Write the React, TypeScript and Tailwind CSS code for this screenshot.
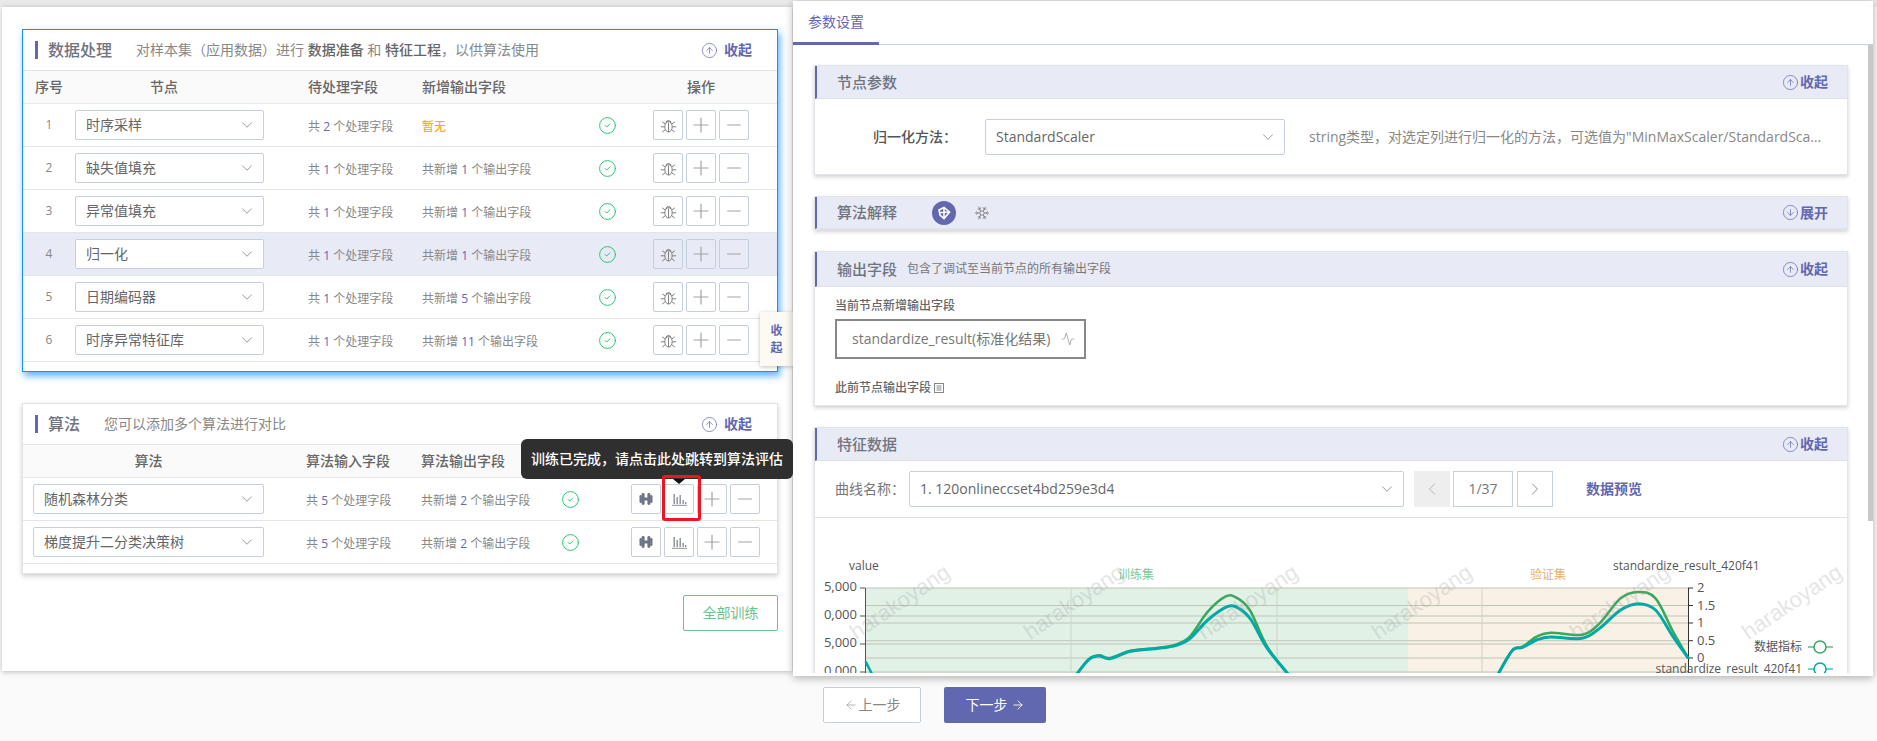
import type { ReactNode } from "react";
import { Activity, ArrowLeft, ArrowRight, ChevronDown, ChevronLeft, ChevronRight, CircleArrowDown, CircleArrowUp, CircleCheck, Minus, Plus, Snowflake } from "lucide-react";

const nodeRows = [
  { name: "时序采样", input: 2, output: null },
  { name: "缺失值填充", input: 1, output: 1 },
  { name: "异常值填充", input: 1, output: 1 },
  { name: "归一化", input: 1, output: 1, active: true },
  { name: "日期编码器", input: 1, output: 5 },
  { name: "时序异常特征库", input: 1, output: 11 },
];

const algoRows = [
  { name: "随机森林分类", input: 5, output: 2, marked: true },
  { name: "梯度提升二分类决策树", input: 5, output: 2 },
];

// curve points read off the zoomed crop
const toReal = (p: number[]) => [780 + p[0] / 1.4293, 420 + p[1] / 3];
const linePath = (pts: number[][]) => {
  const r = pts.map(toReal);
  let d = `M${r[0][0]} ${r[0][1]}`;
  for (let i = 0; i < r.length - 1; i++) {
    const p0 = r[i - 1] || r[i];
    const p1 = r[i];
    const p2 = r[i + 1];
    const p3 = r[i + 2] || p2;
    d += ` C${p1[0] + (p2[0] - p0[0]) / 6} ${p1[1] + (p2[1] - p0[1]) / 6} ${p2[0] - (p3[0] - p1[0]) / 6} ${p2[1] - (p3[1] - p1[1]) / 6} ${p2[0]} ${p2[1]}`;
  }
  return d;
};

const greenA = [[121, 725], [132, 770]];
const greenB = [[420, 770], [440, 718], [455, 706], [470, 714], [500, 692], [540, 683], [565, 673], [585, 648], [610, 575], [635, 530], [650, 532], [670, 570], [695, 680], [728, 770]];
const tealB = [[420, 770], [440, 718], [455, 708], [470, 716], [500, 694], [540, 685], [565, 676], [585, 655], [610, 600], [638, 560], [655, 566], [672, 600], [695, 685], [728, 770]];
const greenC = [[1023, 770], [1045, 692], [1060, 680], [1080, 650], [1100, 638], [1145, 644], [1170, 610], [1200, 535], [1225, 516], [1250, 535], [1275, 635], [1297, 715]];
const tealC = [[1023, 770], [1045, 692], [1060, 682], [1080, 660], [1100, 651], [1145, 655], [1170, 625], [1200, 570], [1225, 551], [1250, 570], [1275, 650], [1297, 715]];

function Collapse({ down, label, tight }: { down?: boolean; label: string; tight?: boolean }) {
  const Icon = down ? CircleArrowDown : CircleArrowUp;
  return (
    <span className={`flex items-center text-sm font-bold text-[#6268b0] ${tight ? "gap-[1px]" : "gap-[6px]"}`}>
      <Icon size={17} strokeWidth={1} />
      {label}
    </span>
  );
}

function FakeSelect({ text, className }: { text: string; className: string }) {
  return (
    <div className={`flex items-center justify-between rounded-[2px] border border-[#c5cfe0] bg-white pl-[10px] pr-[7px] text-sm text-[#666] ${className}`}>
      <span className="truncate">{text}</span>
      <ChevronDown size={18} strokeWidth={1} className="shrink-0 text-[#777]" />
    </div>
  );
}

function OpButton({ children, className = "" }: { children: ReactNode; className?: string }) {
  return (
    <div className={`relative flex h-[30px] w-[30px] items-center justify-center rounded-[2px] border border-[#c5cfdc] text-[#a3a3a3] ${className}`}>
      {children}
    </div>
  );
}

function BugIcon() {
  return (
    <svg width="17" height="17" viewBox="0 0 17 17" fill="none" stroke="#808080" strokeWidth="1">
      <ellipse cx="8.5" cy="9.8" rx="3.7" ry="5.2" />
      <path d="M5.8 5.6 A2.8 2.8 0 0 1 11.2 5.6" />
      <path d="M8.5 5.5 V15" />
      <path d="M5 6.8 L2.2 4.8 M4.8 9.8 H0.8 M5.2 12.8 L2.2 15 M12 6.8 L14.8 4.8 M12.2 9.8 H16.2 M11.8 12.8 L14.8 15" />
    </svg>
  );
}

function Dumbbell() {
  return (
    <svg width="14" height="12" viewBox="0 0 14 12" fill="#6d7486">
      <rect x="0.5" y="2" width="2.4" height="8" rx="1.2" />
      <rect x="2.6" y="0" width="3" height="12" rx="1.4" />
      <rect x="8.4" y="0" width="3" height="12" rx="1.4" />
      <rect x="11.1" y="2" width="2.4" height="8" rx="1.2" />
      <rect x="5" y="4.5" width="4" height="3" />
    </svg>
  );
}

function BarsIcon() {
  return (
    <svg width="15" height="13" viewBox="0 0 15 13" fill="#8a8f99">
      <rect x="0" y="11.8" width="15" height="1" />
      <rect x="1.5" y="1" width="1.4" height="10" />
      <rect x="4.5" y="4" width="1.4" height="7" />
      <rect x="7.5" y="2" width="1.4" height="9" />
      <rect x="10.5" y="7" width="1.4" height="4" />
      <rect x="13" y="9" width="1.4" height="2" />
    </svg>
  );
}

function Count({ prefix, n, suffix }: { prefix: string; n: number; suffix: string }) {
  return (
    <span className="text-xs text-[#888]">
      {prefix} <span className="text-[#6268b0]">{n}</span> {suffix}
    </span>
  );
}

function Chart() {
  const marks = [903, 1077, 1251, 1425, 1623, 1795];
  return (
    <svg width="1033" height="170" viewBox="814 518 1033 170" className="block">
      <rect x="864" y="588" width="543" height="100" fill="#e1f1e6" />
      <rect x="1407" y="588" width="280" height="100" fill="#f9f1e6" />
      {[588, 616, 644, 672, 605.5, 623, 640.7, 658].map((y) => (
        <line key={y} x1="864" x2="1687" y1={y} y2={y} stroke="#bfc4b8" strokeWidth="1" />
      ))}
      {[1070, 1276, 1481].map((x) => (
        <line key={x} x1={x} x2={x} y1="588" y2="688" stroke="#cfd3c8" strokeWidth="1" />
      ))}
      <line x1="864.5" x2="864.5" y1="588" y2="688" stroke="#555" />
      <line x1="1687.5" x2="1687.5" y1="588" y2="688" stroke="#333" />
      {[588, 616, 644, 672].map((y) => (
        <line key={y} x1="859" x2="864" y1={y} y2={y} stroke="#555" />
      ))}
      {[588, 605.5, 623, 640.7, 658].map((y) => (
        <line key={y} x1="1687" x2="1692" y1={y} y2={y} stroke="#333" />
      ))}
      <path d={linePath(greenA)} fill="none" stroke="#00a9a5" strokeWidth="2.5" />
      <path d={linePath(greenB)} fill="none" stroke="#3aa85c" strokeWidth="2.5" />
      <path d={linePath(tealB)} fill="none" stroke="#00a9a5" strokeWidth="3" />
      <path d={linePath(greenC)} fill="none" stroke="#3aa85c" strokeWidth="2.5" />
      <path d={linePath(tealC)} fill="none" stroke="#00a9a5" strokeWidth="3" />
      <g fontSize="12" fill="#555">
        <text x="848" y="570">value</text>
        <text x="1612" y="570">standardize_result_420f41</text>
        <text x="1135" y="579" textAnchor="middle" fill="#7cc79a">训练集</text>
        <text x="1547" y="579" textAnchor="middle" fill="#e6b36e">验证集</text>
        {[["5,000", 591], ["0,000", 619], ["5,000", 647], ["0,000", 675]].map(([t, y], i) => (
          <text key={i} x="856" y={y} textAnchor="end" fontSize="13">{t}</text>
        ))}
        {[["2", 592], ["1.5", 610], ["1", 627], ["0.5", 645], ["0", 662]].map(([t, y]) => (
          <text key={t} x="1696" y={y} fontSize="13">{t}</text>
        ))}
        <text x="1801" y="651" textAnchor="end">数据指标</text>
        <text x="1801" y="673" textAnchor="end">standardize_result_420f41</text>
      </g>
      <line x1="1807" x2="1832" y1="647" y2="647" stroke="#5cbf7f" strokeWidth="1.5" />
      <circle cx="1819" cy="647" r="6" fill="#fff" stroke="#3aa85c" strokeWidth="1.5" />
      <line x1="1807" x2="1832" y1="669" y2="669" stroke="#45c4c0" strokeWidth="1.5" />
      <circle cx="1819" cy="669" r="6" fill="#fff" stroke="#00a9a5" strokeWidth="1.5" />
      {marks.map((x) => (
        <text key={x} x={x} y="608" textAnchor="middle" fontSize="22" fill="#9a9a9a" opacity="0.25" fontFamily="Liberation Sans, sans-serif" transform={`rotate(-34 ${x} 608)`}>
          harakoyang
        </text>
      ))}
    </svg>
  );
}

function Section({ title, sub, collapse = "收起", down, extra, headerClass = "h-[33px]", children }: { title: string; sub?: string; collapse?: string; down?: boolean; extra?: ReactNode; headerClass?: string; children?: ReactNode }) {
  return (
    <section className="mb-[21px] border border-[#e2e4ec] bg-white shadow-[0_2px_4px_rgba(0,0,0,0.18)]">
      <div className={`flex items-center justify-between border-b border-b-[#dfe1ea] border-l-2 border-l-[#6268b0] bg-[#e8eaf6] pl-[20px] pr-[19px] ${headerClass}`}>
        <div className="flex items-center">
          <span className="text-[15px] font-medium text-[#6f7480]">{title}</span>
          {sub && <span className="ml-[10px] text-xs text-[#777]">{sub}</span>}
          {extra}
        </div>
        <Collapse label={collapse} down={down} tight />
      </div>
      {children}
    </section>
  );
}

export default function App() {
  return (
    <div className="relative h-[741px] w-full overflow-hidden bg-[#fafafa] font-['Open_Sans','Noto_Sans_CJK_SC',sans-serif]">
      <div className="h-[7px] bg-[#e9e9e9]" />

      <div className="relative ml-[2px] h-[664px] w-[790px] bg-white pl-[20px] pt-[22px] shadow-[0_1px_5px_rgba(0,0,0,0.25)]">
        {/* 数据处理 */}
        <div className="h-[343px] w-[756px] border border-[#1890ff] shadow-[2px_4px_7px_rgba(24,144,255,0.7)]">
          <div className="flex h-[41px] items-center justify-between border-b border-[#e2e2e2] pl-[12px] pr-[25px]">
            <div className="flex items-center">
              <i className="h-[18px] w-[3px] bg-[#6268b0]" />
              <span className="ml-[10px] text-base font-medium text-[#6f7480]">数据处理</span>
              <span className="ml-[24px] text-sm text-[#888]">
                对样本集（应用数据）进行 <b className="font-medium text-[#666]">数据准备</b> 和 <b className="font-medium text-[#666]">特征工程</b>，以供算法使用
              </span>
            </div>
            <Collapse label="收起" />
          </div>
          <div className="flex h-[33px] items-center border-b border-[#e8e8e8] bg-[#fafafa] text-sm font-medium text-[#666]">
            <span className="w-[52px] text-center">序号</span>
            <span className="w-[189px] pr-[11px] text-center">节点</span>
            <span className="ml-[44px] w-[114px]">待处理字段</span>
            <span className="w-[200px]">新增输出字段</span>
            <span className="ml-[31px] w-[96px] text-center">操作</span>
          </div>
          {nodeRows.map((r, i) => (
            <div key={r.name} className={`flex h-[43px] items-center border-b border-[#e5e5e5] ${r.active ? "bg-[#e8eaf6]" : ""}`}>
              <span className="w-[52px] text-center text-xs text-[#888]">{i + 1}</span>
              <FakeSelect text={r.name} className="h-[30px] w-[189px]" />
              <span className="ml-[44px] w-[114px]"><Count prefix="共" n={r.input} suffix="个处理字段" /></span>
              <span className="w-[170px]">
                {r.output === null ? <span className="text-xs font-medium text-[#ffb000]">暂无</span> : <Count prefix="共新增" n={r.output} suffix="个输出字段" />}
              </span>
              <span className="flex w-[30px] justify-center"><CircleCheck size={19} strokeWidth={1.2} className="text-[#1fc46b]" /></span>
              <div className="ml-[31px] flex gap-[3px]">
                <OpButton><BugIcon /></OpButton>
                <OpButton><Plus size={24} strokeWidth={1.2} /></OpButton>
                <OpButton><Minus size={22} strokeWidth={1.2} /></OpButton>
              </div>
            </div>
          ))}
        </div>

        {/* 算法 */}
        <div className="mt-[31px] h-[171px] w-[756px] border border-[#e2e2e2] shadow-[0_2px_5px_rgba(0,0,0,0.2)]">
          <div className="flex h-[41px] items-center justify-between border-b border-[#e2e2e2] pl-[12px] pr-[25px]">
            <div className="flex items-center">
              <i className="h-[18px] w-[3px] bg-[#6268b0]" />
              <span className="ml-[10px] text-base font-medium text-[#6f7480]">算法</span>
              <span className="ml-[24px] text-sm text-[#888]">您可以添加多个算法进行对比</span>
            </div>
            <Collapse label="收起" />
          </div>
          <div className="flex h-[33px] items-center border-b border-[#e8e8e8] bg-[#fafafa] text-sm font-medium text-[#666]">
            <span className="ml-[10px] w-[231px] text-center">算法</span>
            <span className="ml-[42px] w-[115px]">算法输入字段</span>
            <span className="w-[120px]">算法输出字段</span>
          </div>
          {algoRows.map((r) => (
            <div key={r.name} className="flex h-[43px] items-center border-b border-[#e5e5e5]">
              <FakeSelect text={r.name} className="ml-[10px] h-[30px] w-[231px]" />
              <span className="ml-[42px] w-[115px]"><Count prefix="共" n={r.input} suffix="个处理字段" /></span>
              <span className="w-[134px]"><Count prefix="共新增" n={r.output} suffix="个输出字段" /></span>
              <span className="flex w-[30px] justify-center"><CircleCheck size={19} strokeWidth={1.2} className="text-[#1fc46b]" /></span>
              <div className="ml-[46px] flex gap-[3px]">
                <OpButton><Dumbbell /></OpButton>
                <OpButton>
                  <BarsIcon />
                  {r.marked && <span className="absolute -left-[3px] -top-[10px] z-20 h-[46px] w-[39px] rounded-[3px] border-[3px] border-[#f0141e]" />}
                </OpButton>
                <OpButton><Plus size={24} strokeWidth={1.2} /></OpButton>
                <OpButton><Minus size={22} strokeWidth={1.2} /></OpButton>
              </div>
            </div>
          ))}
        </div>

        <div className="mt-[21px] flex w-[756px] justify-end">
          <button className="h-[36px] w-[95px] rounded-[2px] border border-[#6cc48a] text-sm text-[#6cc48a]">全部训练</button>
        </div>

        {/* tooltip over the table header */}
        <div className="absolute left-[519px] top-[432px] z-10 flex h-[40px] w-[272px] items-center justify-center rounded-[6px] bg-[#2f2f2f] text-sm font-medium text-white">
          训练已完成，请点击此处跳转到算法评估
          <span className="absolute left-[152px] top-[40px] h-0 w-0 border-x-[6px] border-t-[5px] border-x-transparent border-t-[#111]" />
        </div>

        <div className="absolute left-[758px] top-[305px] flex h-[54px] w-[33px] flex-col items-center justify-center bg-[#fdfaf3] text-xs font-bold leading-[17px] text-[#6268b0] shadow-[0_1px_4px_rgba(0,0,0,0.25)]">
          <span>收</span>
          <span>起</span>
        </div>
      </div>

      <div className="mt-[16px] flex justify-center gap-[23px] pr-[8px]">
        <button className="flex h-[36px] w-[98px] items-center justify-center gap-[1px] rounded-[2px] border border-[#c5cfdc] bg-white text-sm text-[#888]">
          <ArrowLeft size={14} strokeWidth={1} />
          上一步
        </button>
        <button className="flex h-[36px] w-[102px] items-center justify-center gap-[3px] rounded-[2px] bg-[#6268b0] text-sm text-white">
          下一步
          <ArrowRight size={14} strokeWidth={1.5} />
        </button>
      </div>

      {/* 参数设置 drawer */}
      <div className="absolute left-[793px] top-[1px] flex h-[675px] w-[1080px] flex-col bg-white pb-[3px] shadow-[0_2px_8px_rgba(0,0,0,0.3)]">
        <div className="h-[44px] shrink-0 border-b border-[#c5cfe0]">
          <div className="flex h-[44px] w-[86px] items-center justify-center border-b-[3px] border-[#6268b0] text-sm text-[#6268b0]">参数设置</div>
        </div>
        <div className="min-h-0 flex-1 overflow-hidden pl-[21px] pr-[25px] pt-[20px]">
          <Section title="节点参数">
            <div className="flex h-[75px] items-center pl-[58px]">
              <span className="w-[112px] text-sm font-medium text-[#555]">归一化方法：</span>
              <FakeSelect text="StandardScaler" className="h-[36px] w-[300px]" />
              <span className="ml-[24px] w-[514px] truncate text-sm text-[#888]">string类型，对选定列进行归一化的方法，可选值为"MinMaxScaler/StandardScaler"</span>
            </div>
          </Section>

          <Section
            title="算法解释"
            collapse="展开"
            down
            headerClass="h-[32px]"
            extra={
              <div className="ml-[35px] flex items-center gap-[18px]">
                <span className="flex h-[24px] w-[24px] items-center justify-center rounded-full bg-[#6268b0]">
                  <svg width="14" height="14" viewBox="0 0 14 14" fill="none" stroke="#fff" strokeWidth="1.6">
                    <path d="M2 4 L7 1.5 L12.5 6 L7 12.5 L3 9 Z" />
                    <path d="M7 1.5 L7 12.5 M2.5 6.5 L12.5 6" />
                  </svg>
                </span>
                <Snowflake size={16} strokeWidth={1.2} className="text-[#777]" />
              </div>
            }
          />

          <Section title="输出字段" sub="包含了调试至当前节点的所有输出字段" headerClass="h-[35px]">
            <div className="h-[118px] pl-[20px] pt-[11px]">
              <div className="text-xs font-medium leading-[16px] text-[#666]">当前节点新增输出字段</div>
              <div className="mt-[5px] flex h-[40px] w-[251px] items-center justify-between border-2 border-[#888] pl-[15px] pr-[9px] text-sm text-[#777]">
                <span className="whitespace-nowrap">standardize_result(标准化结果)</span>
                <Activity size={14} strokeWidth={1} className="shrink-0" />
              </div>
              <div className="mt-[21px] flex items-center gap-[2px] text-xs font-medium leading-[16px] text-[#666]">
                此前节点输出字段
                <svg width="12" height="12" viewBox="0 0 12 12" fill="none" stroke="#888" strokeWidth="1">
                  <rect x="1.5" y="1.5" width="9" height="9" />
                  <path d="M3.5 4 H8.5 M3.5 6 H8.5 M3.5 8 H8.5" />
                </svg>
              </div>
            </div>
          </Section>

          <Section title="特征数据">
            <div className="flex h-[57px] items-center border-b border-[#e0e2e8] pl-[20px]">
              <span className="w-[74px] text-sm text-[#777]">曲线名称：</span>
              <FakeSelect text="1. 120onlineccset4bd259e3d4" className="h-[36px] w-[495px]" />
              <span className="ml-[10px] flex h-[36px] w-[36px] items-center justify-center bg-[#eeeeee] text-[#aaa]"><ChevronLeft size={20} strokeWidth={1} /></span>
              <span className="ml-[3px] flex h-[36px] w-[60px] items-center justify-center border border-[#c5cfe0] text-sm text-[#777]">1/37</span>
              <span className="ml-[4px] flex h-[36px] w-[36px] items-center justify-center border border-[#c5cfe0] text-[#777]"><ChevronRight size={20} strokeWidth={1} /></span>
              <span className="ml-[33px] text-sm font-bold text-[#6268b0]">数据预览</span>
            </div>
            <Chart />
          </Section>
        </div>
        <span className="absolute right-0 top-[44px] h-[476px] w-[5px] bg-[#c8c8c8]" />
      </div>
    </div>
  );
}
